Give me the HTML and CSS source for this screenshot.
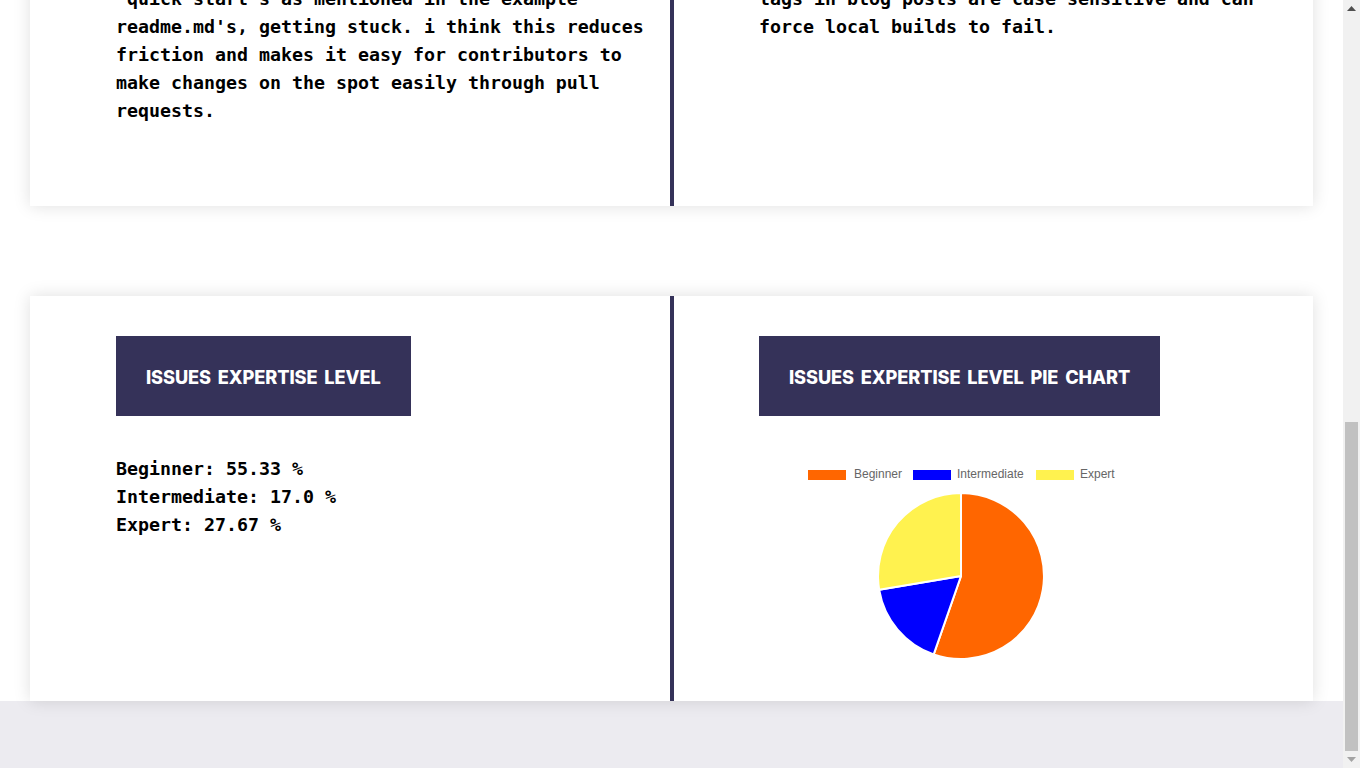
FILE: index.html
```html
<!DOCTYPE html>
<html lang="en">
<head>
<meta charset="utf-8">
<title>Issues Report</title>
<link rel="stylesheet" href="styles.css">
</head>
<body>
<header class="topbar">
  <span class="brand">ISSUES REPORT</span>
</header>
<section class="hero">
  <h1 class="hero-title">Repository Issues Overview</h1>
  <p class="hero-text">A summary of open issues, their recent activity and the expertise needed to resolve them.</p>
</section>
<main class="content">
  <section class="card card-text">
    <div class="col col-left">
      <h2 class="title">Most Recent Issue</h2>
      <p class="body-text">many first time contributors end up following 'quick start's as mentioned in the example readme.md's, getting stuck. i think this reduces friction and makes it easy for contributors to make changes on the spot easily through pull requests.</p>
    </div>
    <div class="col col-right">
      <h2 class="title">Oldest Issue</h2>
      <p class="body-text">the build should warn new contributors because tags in blog posts are case sensitive and can force local builds to fail.</p>
    </div>
  </section>
  <section class="card card-stats">
    <div class="col col-left">
      <h2 class="title">Issues Expertise Level</h2>
      <ul class="stats">
        <li>Beginner: 55.33 %</li>
        <li>Intermediate: 17.0 %</li>
        <li>Expert: 27.67 %</li>
      </ul>
    </div>
    <div class="col col-right">
      <h2 class="title">Issues Expertise Level Pie Chart</h2>
      <svg class="chart" width="404" height="205" viewBox="0 0 404 205">
        <rect x="49" y="14" width="38" height="10" fill="#ff6600"/>
        <text x="95" y="22" class="legend">Beginner</text>
        <rect x="154" y="14" width="38" height="10" fill="#0000ff"/>
        <text x="198" y="22" class="legend">Intermediate</text>
        <rect x="277" y="14" width="38" height="10" fill="#fff24f"/>
        <text x="321" y="22" class="legend">Expert</text>
        <g stroke="#ffffff" stroke-width="2" stroke-linejoin="round">
          <path d="M202 120 L202 37 A83 83 0 1 1 174.7 198.4 Z" fill="#ff6600"/>
          <path d="M202 120 L174.7 198.4 A83 83 0 0 1 120.2 133.8 Z" fill="#0000ff"/>
          <path d="M202 120 L120.2 133.8 A83 83 0 0 1 202 37 Z" fill="#fff24f"/>
        </g>
      </svg>
    </div>
  </section>
</main>
<footer class="footer"></footer>
<div class="scrollbar" aria-hidden="true">
  <div class="sb-button">
    <svg width="9" height="5" viewBox="0 0 9 5"><path d="M0 5 L4.5 0 L9 5 Z" fill="#505050"/></svg>
  </div>
  <div class="sb-track">
    <div class="sb-thumb"></div>
  </div>
  <div class="sb-button">
    <svg width="9" height="5" viewBox="0 0 9 5"><path d="M0 0 L4.5 5 L9 0 Z" fill="#a3a3a3"/></svg>
  </div>
</div>
<script src="script.js"></script>
</body>
</html>
```
FILE: styles.css
```css
html, body {
  margin: 0;
  padding: 0;
}
body {
  background: #ffffff;
  font-family: "DejaVu Sans Mono", "Liberation Mono", monospace;
  color: #000;
}
.topbar {
  height: 70px;
  background: #353259;
  display: flex;
  align-items: center;
  padding: 0 30px;
  box-sizing: border-box;
}
.brand {
  font-family: Inter, "Open Sans", sans-serif;
  font-weight: 800;
  color: #fff;
  font-size: 20px;
}
.hero {
  height: 583px;
  box-sizing: border-box;
  padding: 200px 116px 0;
}
.hero-title {
  margin: 0 0 20px;
  font-family: Inter, sans-serif;
  font-size: 40px;
  color: #353259;
}
.hero-text {
  margin: 0;
  font-size: 18.27px;
  line-height: 28px;
}
.content {
  display: flex;
  flex-direction: column;
  gap: 90px;
  padding: 90px 47px 0 30px;
}
.card {
  background: #fff;
  box-shadow: 0 0 16px rgba(0, 0, 0, 0.13);
  display: grid;
  grid-template-columns: 644px 1fr;
}
.col {
  box-sizing: border-box;
  padding: 40px 20px 40px 85px;
  min-width: 0;
}
.col-left {
  padding-left: 86px;
  border-right: 4px solid #353259;
}
.title {
  display: inline-block;
  margin: 0;
  height: 80px;
  line-height: 82px;
  padding: 0 30px;
  background: #353259;
  color: #fff;
  font-family: Inter, "Open Sans", sans-serif;
  font-weight: 800;
  font-size: 18.2px;
  text-transform: uppercase;
  letter-spacing: -0.1px;
  word-spacing: 3px;
}
.body-text {
  margin: 40px 0 41px;
  font-size: 18.27px;
  line-height: 28px;
  font-weight: bold;
}
.stats {
  list-style: none;
  margin: 39px 0 0;
  padding: 0;
  font-size: 18.27px;
  line-height: 28px;
  font-weight: bold;
}
.chart {
  display: block;
  margin-top: 40px;
}
.legend {
  font-family: "Liberation Sans", Arial, sans-serif;
  font-size: 12px;
  fill: #666666;
}
.footer {
  height: 67px;
  background: #ecebf0;
}
.scrollbar {
  position: fixed;
  top: 0;
  right: 0;
  width: 17px;
  height: 100vh;
  background: #f1f1f1;
  display: flex;
  flex-direction: column;
}
.sb-button {
  height: 17px;
  flex: 0 0 17px;
  display: flex;
  align-items: center;
  justify-content: center;
}
.sb-button svg {
  display: block;
}
.sb-track {
  flex: 1;
  display: flex;
  flex-direction: column;
  justify-content: flex-end;
  align-items: center;
}
.sb-thumb {
  width: 13px;
  height: 329px;
  background: #c1c1c1;
}
```
FILE: script.js
```js
function toBottom() {
  window.scrollTo(0, document.documentElement.scrollHeight);
}
toBottom();
window.addEventListener('load', toBottom);
```
